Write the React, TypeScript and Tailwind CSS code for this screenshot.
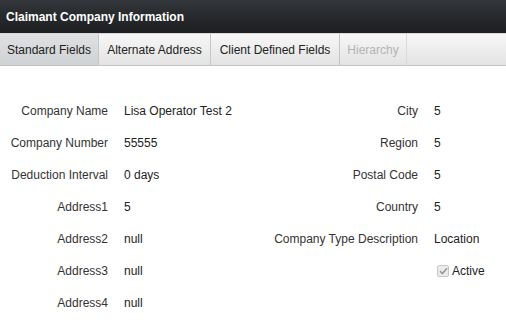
const LEFT = [
  { label: "Company Name", value: "Lisa Operator Test 2" },
  { label: "Company Number", value: "55555" },
  { label: "Deduction Interval", value: "0 days" },
  { label: "Address1", value: "5" },
  { label: "Address2", value: "null" },
  { label: "Address3", value: "null" },
  { label: "Address4", value: "null" },
]

const RIGHT = [
  { label: "City", value: "5" },
  { label: "Region", value: "5" },
  { label: "Postal Code", value: "5" },
  { label: "Country", value: "5" },
  { label: "Company Type Description", value: "Location" },
]

const TABS = [
  { label: "Standard Fields", w: "w-[99px]", active: true },
  { label: "Alternate Address", w: "w-[112px]" },
  { label: "Client Defined Fields", w: "w-[129px]" },
  { label: "Hierarchy", w: "w-[67px]", disabled: true },
]

export default function App() {
  return (
    <div className="w-[506px] h-[326px] bg-white overflow-hidden text-[12px] text-[#333]" style={{ fontFamily: "Arial, 'Liberation Sans', sans-serif" }}>
      {/* title bar */}
      <div className="h-[33px] flex items-center px-[6px] bg-gradient-to-b from-[#33363a] to-[#1c1e20] text-white font-bold text-[12px]">
        Claimant Company Information
      </div>

      {/* tabs */}
      <div className="h-[33px] flex border-t border-[#d8d8d8] border-b border-b-[#c4c4c4] bg-gradient-to-b from-[#f7f7f7] to-[#e3e3e3]">
        {TABS.map(t => (
          <div key={t.label}
            className={`${t.w} flex items-center justify-center pt-px border-r border-[#c6c6c6] ${t.active ? "bg-gradient-to-b from-[#dfe1e3] to-[#cfd2d4]" : ""} ${t.disabled ? "text-[#b3b3b3] border-[#dadada]" : "text-[#222]"}`}>
            {t.label}
          </div>
        ))}
      </div>

      {/* fields */}
      <div className="flex pt-[29px]">
        <div className="flex flex-col">
          {LEFT.map(f => (
            <div key={f.label} className="h-[32px] flex items-center">
              <span className="w-[108px] text-right text-[#333]">{f.label}</span>
              <span className="w-[150px] pl-[16px] text-[#222]">{f.value}</span>
            </div>
          ))}
        </div>
        <div className="flex flex-col">
          {RIGHT.map(f => (
            <div key={f.label} className="h-[32px] flex items-center">
              <span className="w-[160px] text-right text-[#333]">{f.label}</span>
              <span className="pl-[16px] text-[#222]">{f.value}</span>
            </div>
          ))}
          <div className="h-[32px] flex items-center pl-[179px]">
            <span className="w-[12px] h-[12px] rounded-[2px] border border-[#c8c8c8] bg-[#ececec] flex items-center justify-center">
              <svg width="9" height="8" viewBox="0 0 9 8">
                <path d="M1 4.2 L3.4 6.5 L8 1.2" fill="none" stroke="#9a9a9a" strokeWidth="1.7" />
              </svg>
            </span>
            <span className="ml-[3px] text-[#222]">Active</span>
          </div>
        </div>
      </div>
    </div>
  )
}
